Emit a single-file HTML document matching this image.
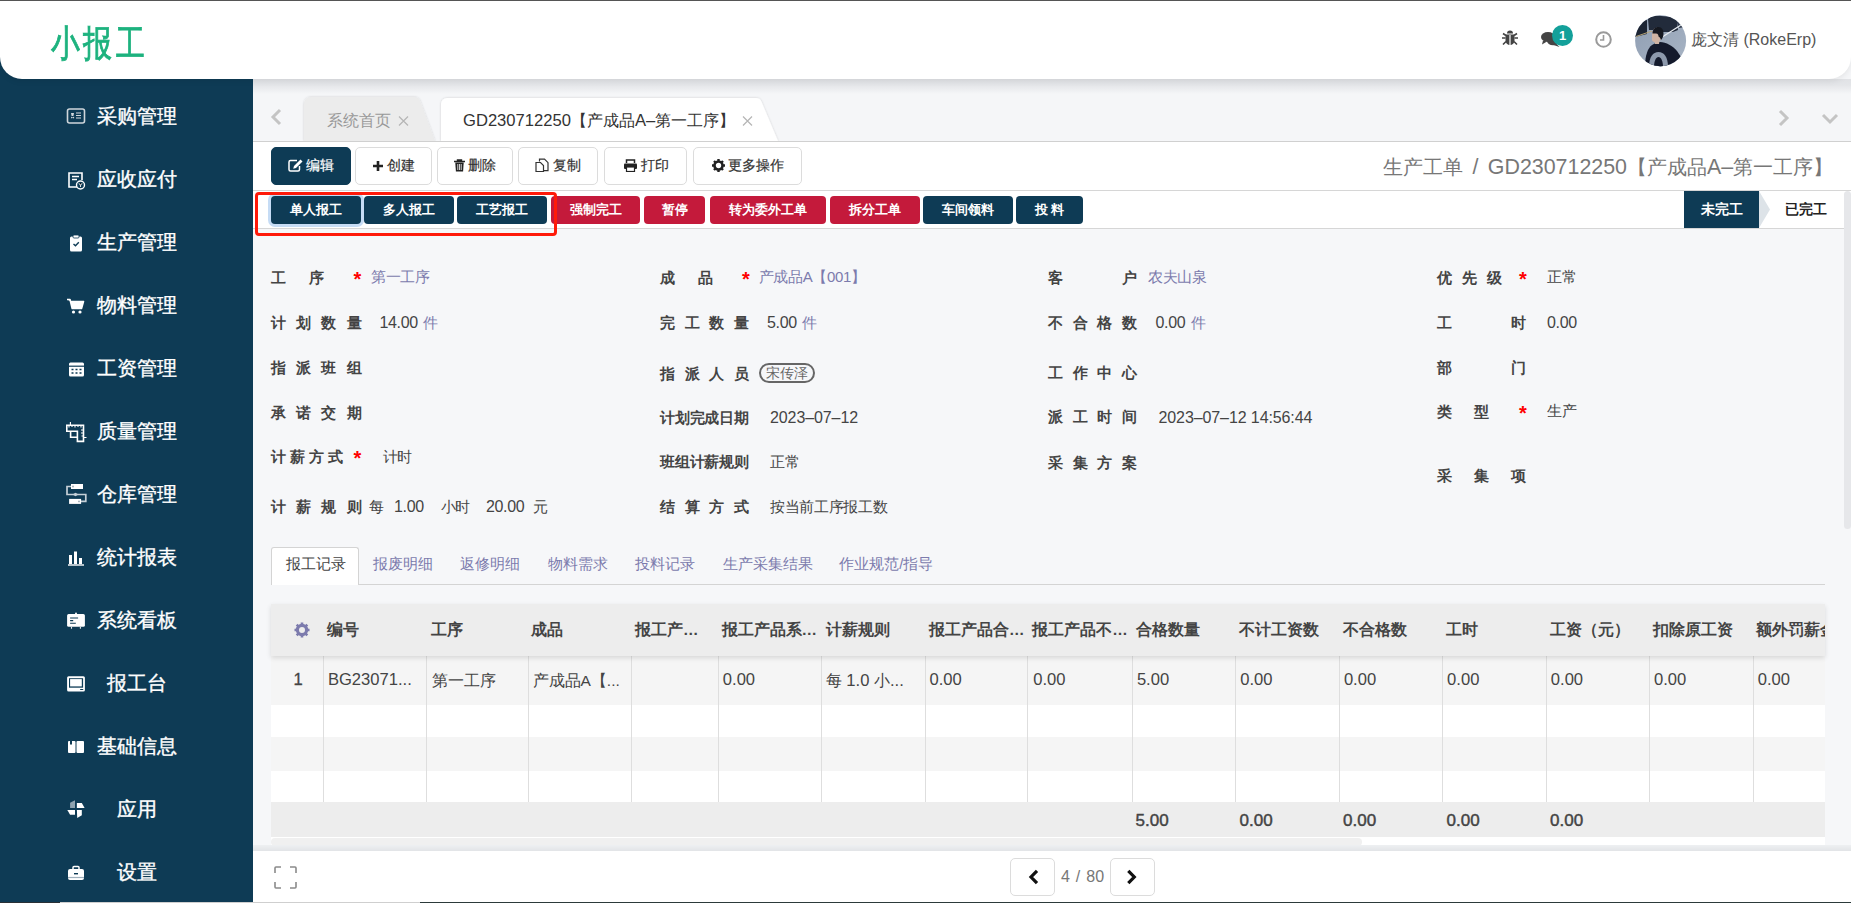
<!DOCTYPE html>
<html><head><meta charset="utf-8">
<style>
*{box-sizing:border-box;margin:0;padding:0}
html,body{width:1851px;height:903px;overflow:hidden}
body{position:relative;background:#f5f6f8;font-family:"Liberation Sans",sans-serif;color:#444;font-size:14px}
.a{position:absolute;white-space:nowrap}
#topline{position:absolute;left:0;top:0;width:1851px;height:1px;background:#555;z-index:20}
#header{position:absolute;left:0;top:1px;width:1851px;height:78px;background:#fff;border-radius:0 0 22px 22px;box-shadow:0 2px 6px rgba(0,0,0,.08);z-index:10}
#logo{left:50.5px;top:21px;font-size:37px;line-height:44px;color:#1db27e;letter-spacing:4.5px;transform:scaleX(.78);transform-origin:0 0;-webkit-text-stroke:.9px #1db27e}
#sidebar{position:absolute;left:0;top:0;width:253px;height:903px;background:#0e3b55;z-index:5}
.mi{position:absolute;left:0;width:253px;height:40px;color:#fff;font-size:20px;line-height:40px}
.mi .t{position:absolute;left:97px;top:0;width:80px;text-align:center;-webkit-text-stroke:.35px #fff}
.mi svg{position:absolute;left:66px;top:11px}
#main{position:static}

.tb{position:absolute;top:147px;height:38px;border:1px solid #dcdcdc;border-radius:5px;background:#fff;color:#333;font-size:14px;line-height:34px;text-align:center;-webkit-text-stroke:.2px currentColor}
.tb svg{vertical-align:-2px;margin-right:3px}
.ab{position:absolute;top:196px;height:28px;border-radius:4px;color:#fff;font-size:13px;line-height:28px;text-align:center;font-weight:bold;background:#0e3b55}
.ab.r{background:#c41a3b}

#formbg{position:absolute;left:253px;top:229px;width:1598px;height:621px;background:#f6f7f9}
.lb{font-size:15px;line-height:20px;font-weight:bold;color:#444}
.st{font-size:20px;line-height:20px;color:#f00;font-weight:bold;margin-top:1px;margin-left:1px}
.vl{font-size:15px;letter-spacing:-.35px;line-height:20px;color:#444}
.vl .n{font-size:16px;margin-right:1.5px}
.lk{color:#7c7bad}
.tag{height:20px;width:56px;border:2px solid #666;border-radius:10px;font-size:14px;line-height:16px;color:#666;text-align:center}

.nt{font-size:14.7px;line-height:20px}
.th{font-size:15.5px;line-height:20px;font-weight:bold;color:#444}
.td{font-size:16.6px;line-height:20px;color:#444}
.td.c{font-size:15.5px;margin-top:1px}
.td.b{font-weight:normal;-webkit-text-stroke:.3px #444}
.tf{font-size:17px;line-height:20px;color:#444;-webkit-text-stroke:.45px #444}
.pg{position:absolute;width:45px;height:38px;border:1px solid #dcdcdc;border-radius:5px;background:#fff}
.pg svg{position:absolute;left:-1px;top:-1px}
</style></head><body>
<div id="topline"></div>
<div id="sidebar">
<div class="mi" style="top:96px"><svg width="20" height="18" viewBox="0 0 20 18"><rect x="1.5" y="2" width="17" height="14" rx="2" fill="none" stroke="#cfd6db" stroke-width="1.6"/><path d="M5 6h3l-.6 3H5.6z" fill="#cfd6db"/><circle cx="5.8" cy="10.6" r=".8" fill="#cfd6db"/><circle cx="7.4" cy="10.6" r=".8" fill="#cfd6db"/><path d="M10 6h5M10 8.5h5M10 11h5" stroke="#cfd6db" stroke-width="1.2"/></svg><span class="t">采购管理</span></div>
<div class="mi" style="top:159px"><svg width="20" height="20" viewBox="0 0 20 20"><path d="M12 17H3V3h13v7" fill="none" stroke="#fff" stroke-width="1.6"/><path d="M6 6.5h7M6 9.5h5" stroke="#fff" stroke-width="1.4"/><circle cx="14.5" cy="15" r="4" fill="#0e3b55" stroke="#fff" stroke-width="1.4"/><path d="M13 13.3l1.5 2 1.5-2M14.5 15.3v1.6" stroke="#fff" stroke-width="1"/></svg><span class="t">应收应付</span></div>
<div class="mi" style="top:222px"><svg width="20" height="20" viewBox="0 0 20 20"><rect x="4" y="3.5" width="12" height="15" rx="1.5" fill="#fff"/><rect x="7" y="2" width="6" height="3" rx="1" fill="#fff" stroke="#0e3b55" stroke-width=".8"/><path d="M7.5 11l2 1.8 3.3-3.5" fill="none" stroke="#0e3b55" stroke-width="1.4"/></svg><span class="t">生产管理</span></div>
<div class="mi" style="top:285px"><svg width="20" height="20" viewBox="0 0 20 20"><path d="M1 3.5h3l2.2 9h9.3l2-7H5.2" fill="#fff" stroke="#fff" stroke-width="1.6" stroke-linejoin="round"/><circle cx="7.5" cy="16" r="1.6" fill="#fff"/><circle cx="14" cy="16" r="1.6" fill="#fff"/></svg><span class="t">物料管理</span></div>
<div class="mi" style="top:348px"><svg width="20" height="20" viewBox="0 0 20 20"><rect x="3" y="3.5" width="15" height="14" rx="1.5" fill="#fff"/><path d="M3 7.2h15" stroke="#0e3b55" stroke-width="1.2"/><path d="M5.5 10.5h2M9.5 10.5h2M13.5 10.5h2M5.5 14h2M9.5 14h2M13.5 14h2" stroke="#0e3b55" stroke-width="1.6"/></svg><span class="t">工资管理</span></div>
<div class="mi" style="top:411px"><svg width="22" height="22" viewBox="0 0 22 22"><path d="M0.8 3.2H17.5V19.4H11.4V9.2H0.8Z" fill="none" stroke="#fff" stroke-width="1.6"/><path d="M4.6 9.2V15.3H11.4" fill="none" stroke="#fff" stroke-width="1.6"/><path d="M4.4 0V3M17.5 15.5H20.5M3 3v2.5M6 3v2M9 3v2.5M12 3v2M15 5.5v-2M17.5 8H15M17.5 11h-2.5M17.5 14h-2" stroke="#fff" stroke-width="1.1"/></svg><span class="t">质量管理</span></div>
<div class="mi" style="top:474px" ><svg style="top:8px" width="22" height="24" viewBox="0 0 22 24"><rect x="5" y="2" width="12" height="5" fill="#fff"/><rect x="3.1" y="16.9" width="12" height="5" fill="#fff"/><path d="M5 4.5H1V12.5H19.8V19.4H15" fill="none" stroke="#c5d0d8" stroke-width="1.7"/><path d="M6.5 12.5L9.5 10.8 12.5 12.5 9.5 14.2z" fill="#c5d0d8"/><circle cx="7" cy="4.5" r=".9" fill="#9aa8b3"/><circle cx="13" cy="19.4" r=".9" fill="#9aa8b3"/></svg><span class="t">仓库管理</span></div>
<div class="mi" style="top:537px"><svg width="20" height="20" viewBox="0 0 20 20"><path d="M3 7h3v9H3zM8 3.5h3V16H8zM13 10h3v6h-3z" fill="#fff"/><path d="M2 17h16" stroke="#fff" stroke-width="1.4"/></svg><span class="t">统计报表</span></div>
<div class="mi" style="top:600px"><svg width="20" height="20" viewBox="0 0 20 20"><rect x="1.1" y="3.1" width="17.8" height="12.7" rx="1.5" fill="#fff"/><circle cx="10" cy="2.6" r="1" fill="#fff"/><path d="M4.1 7H12.1M4.1 9.6H7.2M4.1 12.2H9.8" stroke="#0e3b55" stroke-width="1.1"/><path d="M5.5 15.8V17.8M14.4 15.8V17.8" stroke="#dfe5e9" stroke-width="1.1"/></svg><span class="t">系统看板</span></div>
<div class="mi" style="top:663px"><svg width="20" height="20" viewBox="0 0 20 20"><rect x="1.1" y="2.2" width="17.8" height="15.2" rx="1.5" fill="#fff"/><rect x="3" y="4.2" width="14.1" height="9.5" fill="#0e3b55"/><rect x="4.1" y="5.1" width="11.7" height="7.3" fill="#fff"/><rect x="14" y="15.1" width="3.4" height="0.9" rx=".4" fill="#0e3b55"/></svg><span class="t">报工台</span></div>
<div class="mi" style="top:726px"><svg width="20" height="20" viewBox="0 0 20 20"><rect x="2" y="4" width="7.5" height="12" rx="1" fill="#fff"/><rect x="10.5" y="4" width="7.5" height="12" rx="1" fill="#fff"/><path d="M4 4v4l1-1 1 1V4" fill="#0e3b55"/></svg><span class="t">基础信息</span></div>
<div class="mi" style="top:789px"><svg width="20" height="20" viewBox="0 0 20 20"><path d="M4.1 2.8L9 0.3V8H4.1z" fill="#8fa3b0"/><path d="M10.9 3.1H15.8L18.6 8H10.9z" fill="#fff"/><path d="M1.3 9.9H9V14.8H4.1z" fill="#fff"/><path d="M10.9 9.9H15.8V15.2L11.2 18z" fill="#fff"/></svg><span class="t">应用</span></div>
<div class="mi" style="top:852px"><svg width="20" height="20" viewBox="0 0 20 20"><rect x="2" y="6" width="16" height="11" rx="2" fill="#fff"/><path d="M7 6V4.5a1 1 0 0 1 1-1h4a1 1 0 0 1 1 1V6" fill="none" stroke="#fff" stroke-width="1.5"/><rect x="8" y="10" width="4" height="1.4" fill="#0e3b55"/><path d="M2 14.5h16" stroke="#9fb0bc" stroke-width="1.2"/></svg><span class="t">设置</span></div>
</div>
<div id="header">
  <div class="a" id="logo">小报工</div>
  <svg class="a" style="left:1501px;top:28px" width="18" height="18" viewBox="0 0 18 18"><path d="M6 4.5a3 3 0 0 1 6 0z" fill="#444"/><path d="M4.5 5.5h9v6a4.5 4.5 0 0 1-9 0z" fill="#444"/><path d="M9 6v10" stroke="#fff" stroke-width="1.2"/><path d="M4.5 9H1M13.5 9H17M5 6.5L2 4.5M13 6.5l3-2M5 12.5l-3 3M13 12.5l3 3" stroke="#444" stroke-width="1.6"/></svg>
  <svg class="a" style="left:1541px;top:30px" width="20" height="17" viewBox="0 0 20 17"><ellipse cx="7" cy="6" rx="7" ry="5" fill="#444"/><path d="M2 9.5L1 13.5 6 10.5z" fill="#444"/><ellipse cx="12" cy="10" rx="6" ry="4.2" fill="#444"/><path d="M15 12.5l3.5 3.5-6-2z" fill="#444"/></svg>
  <div class="a" style="left:1552px;top:24px;width:21px;height:21px;border-radius:50%;background:#13a09a;color:#fff;font-size:13px;line-height:21px;text-align:center;font-weight:bold">1</div>
  <svg class="a" style="left:1595px;top:30px" width="17" height="17" viewBox="0 0 17 17"><circle cx="8.5" cy="8.5" r="7.3" fill="none" stroke="#9a9a9a" stroke-width="2"/><path d="M8.5 4v5H5" fill="none" stroke="#9a9a9a" stroke-width="1.6"/></svg>
  <svg class="a" style="left:1635px;top:14px" width="52" height="52" viewBox="0 0 52 52"><defs><clipPath id="av"><circle cx="25.6" cy="25.7" r="25.5"/></clipPath><linearGradient id="avg" x1="0" y1="0" x2="1" y2="1"><stop offset="0" stop-color="#8e9db2"/><stop offset="1" stop-color="#a9b5c5"/></linearGradient></defs><g clip-path="url(#av)"><rect width="52" height="52" fill="url(#avg)"/><path d="M0 8L12 5V19L0 22z" fill="#1c2433"/><path d="M13 4c2-3 10-4 13-3l12 1 4 4 1 9-5 2H28l-3-2H14z" fill="#222b3b"/><path d="M40 3l8 3 2 6-6 1z" fill="#2e384a"/><path d="M1 21.5L17 16" stroke="#b9a77a" stroke-width="1"/><path d="M28 21.5L46 10" stroke="#e8ecf0" stroke-width="1.3"/><path d="M10 52c0-12 3-19 7-22 3-2 6-3 8-3 6 0 13 4 17 9l4 6v10z" fill="#141a2c"/><path d="M17 21c0-5 2-8.5 5.5-8.5 3 0 5 3 5 6.5 0 3-1.5 5.5-3 7l-.5 3h-4l-.5-2c-1.5 0-2.5-1-2.5-2.5z" fill="#cfb3a3"/><path d="M17.5 18.5c0-4 2.5-6.5 6-6.5s5 3 5 6.5c0 3-1 5-2.5 6.5-.5-2-1.5-3-2.5-3.5 0-1.5-.5-3-2.5-3z" fill="#151820"/><path d="M14 52c0-10 4-15 9.5-15S33 42 33 52z" fill="#8d99ac"/><path d="M19 52c0-6 2-10 4.5-10S28 46 28 52z" fill="#141a2c"/></g></svg>
  <div class="a" style="left:1691px;top:29px;font-size:16px;line-height:20px;color:#555">庞文清 (RokeErp)</div>
</div>
<div id="main">
<div class="a" style="left:253px;top:79px;width:1598px;height:15px;background:linear-gradient(rgba(30,35,50,.095),rgba(30,35,50,.08) 40%,rgba(30,35,50,0));z-index:6"></div>
<!-- tab bar -->
<svg class="a" style="left:253px;top:80px" width="1598" height="62" viewBox="253 80 1598 62">
 <defs><filter id="tsh" x="-10%" y="-20%" width="120%" height="140%"><feDropShadow dx="0" dy="0" stdDeviation="1" flood-color="#000" flood-opacity=".17"/></filter></defs>
 <path d="M304 141V104a7 7 0 0 1 7-7H414a7 7 0 0 1 6.2 4.2L435 141z" fill="#ececec" filter="url(#tsh)"/>
 <path d="M441 141V104a6 6 0 0 1 6-6H756a6 6 0 0 1 5.6 4L778 141z" fill="#fff" filter="url(#tsh)"/>
 <path d="M253 141.5H1851" stroke="#d0d0d0" stroke-width="1"/>
 <path d="M280 110l-7 7 7 7" fill="none" stroke="#c4c4c4" stroke-width="3"/>
 <path d="M1780 111l7 7-7 7" fill="none" stroke="#c4c4c4" stroke-width="3"/>
 <path d="M1823 115l7 7 7-7" fill="none" stroke="#c4c4c4" stroke-width="3"/>
</svg>
<div class="a" style="left:327px;top:111px;font-size:16px;line-height:20px;color:#999">系统首页</div>
<svg class="a" style="left:398px;top:116px" width="11" height="10" viewBox="0 0 11 10"><path d="M1 0.5l9 9M10 0.5l-9 9" stroke="#b5b5b5" stroke-width="1.2"/></svg>
<div class="a" style="left:463px;top:111px;font-size:16px;line-height:20px;color:#333"><span style="font-size:16.6px">GD230712250</span>【产成品<span style="font-size:16.6px">A–</span>第一工序】</div>
<svg class="a" style="left:742px;top:116px" width="11" height="10" viewBox="0 0 11 10"><path d="M1 0.5l9 9M10 0.5l-9 9" stroke="#b5b5b5" stroke-width="1.2"/></svg>
<!-- toolbar -->
<div class="a" style="left:253px;top:142px;width:1598px;height:48px;background:#fff"></div>
<div class="a" style="left:253px;top:190px;width:1598px;height:1px;background:#d6d6d6"></div>
<div class="tb" style="left:271px;width:80px;background:#0e3b55;border-color:#0e3b55;color:#fff"><svg width="15" height="13" viewBox="0 0 15 13"><path d="M9 1.5H2.5a1.5 1.5 0 0 0-1.5 1.5v7.5a1.5 1.5 0 0 0 1.5 1.5H10a1.5 1.5 0 0 0 1.5-1.5V7" fill="none" stroke="#fff" stroke-width="1.5"/><path d="M12.5 0.5l2 2-6.5 6.5-2.8.8.8-2.8z" fill="#fff"/></svg>编辑</div>
<div class="tb" style="left:355px;width:77px"><svg width="12" height="12" viewBox="0 0 12 12"><path d="M6 1v10M1 6h10" stroke="#222" stroke-width="2.6"/></svg>创建</div>
<div class="tb" style="left:437px;width:76px"><svg width="11" height="13" viewBox="0 0 11 13"><path d="M0 2.5h11M3.5 2.5V1h4v1.5" fill="none" stroke="#222" stroke-width="1.4"/><path d="M1.3 3.5h8.4l-.6 9H1.9z" fill="#222"/><path d="M3.8 5v6M5.5 5v6M7.2 5v6" stroke="#fff" stroke-width=".8"/></svg>删除</div>
<div class="tb" style="left:518px;width:80px"><svg width="15" height="14" viewBox="0 0 15 14"><path d="M4.5 3.5V1.2h5L13 4.7v8h-5" fill="none" stroke="#333" stroke-width="1.2"/><path d="M1 4.5h4.5L8.5 7.5v6H1z" fill="none" stroke="#333" stroke-width="1.2"/></svg>复制</div>
<div class="tb" style="left:604px;width:83px"><svg width="15" height="13" viewBox="0 0 15 13"><path d="M3.5 4V1h8v3" fill="none" stroke="#222" stroke-width="1.5"/><rect x="1" y="4.5" width="13" height="5.5" rx="1" fill="#222"/><rect x="3.5" y="8" width="8" height="4.5" fill="#fff" stroke="#222" stroke-width="1.2"/></svg>打印</div>
<div class="tb" style="left:693px;width:109px"><svg width="13" height="13" viewBox="0 0 13 13"><circle cx="6.5" cy="6.5" r="4" fill="none" stroke="#222" stroke-width="2.6"/><path d="M6.5 0v3M6.5 10v3M0 6.5h3M10 6.5h3M2 2l2 2M9 9l2 2M11 2L9 4M2 11l2-2" stroke="#222" stroke-width="2.4"/></svg>更多操作</div>
<div class="a" style="left:1383px;top:155px;font-size:20px;line-height:24px;color:#777">生产工单<span style="font-size:21.4px;word-spacing:3.5px"> / GD230712250</span>【产成品<span style="font-size:21.4px">A–</span>第一工序】</div>
<div id="formbg"></div>
<!--FORM-->
<span class="a lb" style="left:271.3px;top:268px">工</span>
<span class="a lb" style="left:309.2px;top:268px">序</span>
<span class="a st" style="left:352.5px;top:268px">*</span>
<span class="a vl" style="left:371.0px;top:267px"><span class="lk">第一工序</span></span>
<span class="a lb" style="left:270.8px;top:313px">计</span>
<span class="a lb" style="left:296.1px;top:313px">划</span>
<span class="a lb" style="left:321.4px;top:313px">数</span>
<span class="a lb" style="left:346.7px;top:313px">量</span>
<span class="a vl" style="left:379.5px;top:313px"><span class="n">14.00</span> <span class="lk">件</span></span>
<span class="a lb" style="left:270.8px;top:358px">指</span>
<span class="a lb" style="left:296.1px;top:358px">派</span>
<span class="a lb" style="left:321.4px;top:358px">班</span>
<span class="a lb" style="left:346.7px;top:358px">组</span>
<span class="a lb" style="left:270.8px;top:403px">承</span>
<span class="a lb" style="left:296.1px;top:403px">诺</span>
<span class="a lb" style="left:321.4px;top:403px">交</span>
<span class="a lb" style="left:346.7px;top:403px">期</span>
<span class="a lb" style="left:271.3px;top:447px">计</span>
<span class="a lb" style="left:290.3px;top:447px">薪</span>
<span class="a lb" style="left:309.4px;top:447px">方</span>
<span class="a lb" style="left:328.4px;top:447px">式</span>
<span class="a st" style="left:352.5px;top:447px">*</span>
<span class="a vl" style="left:382.5px;top:447px">计时</span>
<span class="a lb" style="left:270.8px;top:497px">计</span>
<span class="a lb" style="left:296.1px;top:497px">薪</span>
<span class="a lb" style="left:321.4px;top:497px">规</span>
<span class="a lb" style="left:346.7px;top:497px">则</span>
<span class="a vl" style="left:368.5px;top:497px">每</span>
<span class="a vl" style="left:394.0px;top:497px"><span class="n">1.00</span></span>
<span class="a vl" style="left:440.8px;top:497px">小时</span>
<span class="a vl" style="left:486.0px;top:497px"><span class="n">20.00</span></span>
<span class="a vl" style="left:533.0px;top:497px">元</span>
<span class="a lb" style="left:659.5px;top:268px">成</span>
<span class="a lb" style="left:698.4px;top:268px">品</span>
<span class="a st" style="left:741.0px;top:268px">*</span>
<span class="a vl" style="left:758.8px;top:267px"><span class="lk">产成品A【001】</span></span>
<span class="a lb" style="left:659.5px;top:313px">完</span>
<span class="a lb" style="left:684.5px;top:313px">工</span>
<span class="a lb" style="left:709.4px;top:313px">数</span>
<span class="a lb" style="left:734.4px;top:313px">量</span>
<span class="a vl" style="left:767.0px;top:313px"><span class="n">5.00</span> <span class="lk">件</span></span>
<span class="a lb" style="left:659.5px;top:363.5px">指</span>
<span class="a lb" style="left:684.5px;top:363.5px">派</span>
<span class="a lb" style="left:709.4px;top:363.5px">人</span>
<span class="a lb" style="left:734.4px;top:363.5px">员</span>
<span class="a tag" style="left:759px;top:363px">宋传泽</span>
<span class="a lb" style="left:659.5px;top:408.3px">计</span>
<span class="a lb" style="left:674.5px;top:408.3px">划</span>
<span class="a lb" style="left:689.5px;top:408.3px">完</span>
<span class="a lb" style="left:704.4px;top:408.3px">成</span>
<span class="a lb" style="left:719.4px;top:408.3px">日</span>
<span class="a lb" style="left:734.4px;top:408.3px">期</span>
<span class="a vl" style="left:770.0px;top:407.5px"><span class="n" style="letter-spacing:-.1px">2023–07–12</span></span>
<span class="a lb" style="left:659.5px;top:452.4px">班</span>
<span class="a lb" style="left:674.5px;top:452.4px">组</span>
<span class="a lb" style="left:689.5px;top:452.4px">计</span>
<span class="a lb" style="left:704.4px;top:452.4px">薪</span>
<span class="a lb" style="left:719.4px;top:452.4px">规</span>
<span class="a lb" style="left:734.4px;top:452.4px">则</span>
<span class="a vl" style="left:770.0px;top:452.4px">正常</span>
<span class="a lb" style="left:659.5px;top:497.4px">结</span>
<span class="a lb" style="left:684.5px;top:497.4px">算</span>
<span class="a lb" style="left:709.4px;top:497.4px">方</span>
<span class="a lb" style="left:734.4px;top:497.4px">式</span>
<span class="a vl" style="left:770.0px;top:497.4px">按当前工序报工数</span>
<span class="a lb" style="left:1047.5px;top:268px">客</span>
<span class="a lb" style="left:1122.4px;top:268px">户</span>
<span class="a vl" style="left:1148.0px;top:267px"><span class="lk">农夫山泉</span></span>
<span class="a lb" style="left:1047.5px;top:313px">不</span>
<span class="a lb" style="left:1072.5px;top:313px">合</span>
<span class="a lb" style="left:1097.4px;top:313px">格</span>
<span class="a lb" style="left:1122.4px;top:313px">数</span>
<span class="a vl" style="left:1155.5px;top:313px"><span class="n">0.00</span> <span class="lk">件</span></span>
<span class="a lb" style="left:1047.5px;top:363px">工</span>
<span class="a lb" style="left:1072.5px;top:363px">作</span>
<span class="a lb" style="left:1097.4px;top:363px">中</span>
<span class="a lb" style="left:1122.4px;top:363px">心</span>
<span class="a lb" style="left:1047.5px;top:407.4px">派</span>
<span class="a lb" style="left:1072.5px;top:407.4px">工</span>
<span class="a lb" style="left:1097.4px;top:407.4px">时</span>
<span class="a lb" style="left:1122.4px;top:407.4px">间</span>
<span class="a vl" style="left:1158.5px;top:407.5px"><span class="n" style="letter-spacing:-.1px">2023–07–12 14:56:44</span></span>
<span class="a lb" style="left:1047.5px;top:453.3px">采</span>
<span class="a lb" style="left:1072.5px;top:453.3px">集</span>
<span class="a lb" style="left:1097.4px;top:453.3px">方</span>
<span class="a lb" style="left:1122.4px;top:453.3px">案</span>
<span class="a lb" style="left:1436.5px;top:268px">优</span>
<span class="a lb" style="left:1462.0px;top:268px">先</span>
<span class="a lb" style="left:1487.4px;top:268px">级</span>
<span class="a st" style="left:1518.0px;top:268px">*</span>
<span class="a vl" style="left:1547.0px;top:267px">正常</span>
<span class="a lb" style="left:1436.5px;top:313px">工</span>
<span class="a lb" style="left:1511.4px;top:313px">时</span>
<span class="a vl" style="left:1547.0px;top:313px"><span class="n">0.00</span></span>
<span class="a lb" style="left:1436.5px;top:358px">部</span>
<span class="a lb" style="left:1511.4px;top:358px">门</span>
<span class="a lb" style="left:1436.5px;top:402px">类</span>
<span class="a lb" style="left:1474.4px;top:402px">型</span>
<span class="a st" style="left:1518.0px;top:402px">*</span>
<span class="a vl" style="left:1547.0px;top:401px">生产</span>
<span class="a lb" style="left:1436.5px;top:466px">采</span>
<span class="a lb" style="left:1474.0px;top:466px">集</span>
<span class="a lb" style="left:1511.4px;top:466px">项</span>
<!--/FORM-->
<!--TABLE-->
<div class="a" style="left:271px;top:583.5px;width:1554px;height:1px;background:#d4d4d4"></div>
<div class="a" style="left:271px;top:547px;width:88px;height:38px;background:#fff;border:1px solid #d4d4d4;border-bottom:none;border-radius:3px 3px 0 0"></div>
<span class="a nt" style="left:286.0px;top:554px;color:#444">报工记录</span>
<span class="a nt" style="left:373.0px;top:554px;color:#7c7bad">报废明细</span>
<span class="a nt" style="left:459.9px;top:554px;color:#7c7bad">返修明细</span>
<span class="a nt" style="left:547.7px;top:554px;color:#7c7bad">物料需求</span>
<span class="a nt" style="left:635.1px;top:554px;color:#7c7bad">投料记录</span>
<span class="a nt" style="left:722.8px;top:554px;color:#7c7bad">生产采集结果</span>
<span class="a nt" style="left:839.3px;top:554px;color:#7c7bad">作业规范/指导</span>
<div class="a" style="left:271px;top:603.5px;width:1554px;height:52.5px;background:#ededed;box-shadow:0 2px 5px rgba(0,0,0,.12);z-index:2"></div>
<div class="a" style="left:271px;top:656px;width:1554px;height:48.7px;background:#f5f5f5"></div>
<div class="a" style="left:271px;top:704.7px;width:1554px;height:32.3px;background:#fff"></div>
<div class="a" style="left:271px;top:737px;width:1554px;height:33.7px;background:#f5f5f5"></div>
<div class="a" style="left:271px;top:770.7px;width:1554px;height:31.3px;background:#fff"></div>
<div class="a" style="left:271px;top:802px;width:1554px;height:35px;background:#ededed"></div>
<div class="a" style="left:323.0px;top:656px;width:1px;height:146px;background:#dedede"></div>
<div class="a" style="left:425.9px;top:656px;width:1px;height:146px;background:#dedede"></div>
<div class="a" style="left:528.0px;top:656px;width:1px;height:146px;background:#dedede"></div>
<div class="a" style="left:630.9px;top:656px;width:1px;height:146px;background:#dedede"></div>
<div class="a" style="left:717.9px;top:656px;width:1px;height:146px;background:#dedede"></div>
<div class="a" style="left:821.1px;top:656px;width:1px;height:146px;background:#dedede"></div>
<div class="a" style="left:925.2px;top:656px;width:1px;height:146px;background:#dedede"></div>
<div class="a" style="left:1027.4px;top:656px;width:1px;height:146px;background:#dedede"></div>
<div class="a" style="left:1132.1px;top:656px;width:1px;height:146px;background:#dedede"></div>
<div class="a" style="left:1235.3px;top:656px;width:1px;height:146px;background:#dedede"></div>
<div class="a" style="left:1339.0px;top:656px;width:1px;height:146px;background:#dedede"></div>
<div class="a" style="left:1442.2px;top:656px;width:1px;height:146px;background:#dedede"></div>
<div class="a" style="left:1545.9px;top:656px;width:1px;height:146px;background:#dedede"></div>
<div class="a" style="left:1649.1px;top:656px;width:1px;height:146px;background:#dedede"></div>
<div class="a" style="left:1752.8px;top:656px;width:1px;height:146px;background:#dedede"></div>
<svg class="a" style="left:293.5px;top:621.5px;z-index:3" width="16" height="16" viewBox="0 0 16 16"><circle cx="8" cy="8" r="4.6" fill="none" stroke="#7c7bad" stroke-width="3.2"/><path d="M8 0.5v3M8 12.5v3M0.5 8h3M12.5 8h3M2.7 2.7l2.1 2.1M11.2 11.2l2.1 2.1M13.3 2.7l-2.1 2.1M2.7 13.3l2.1-2.1" stroke="#7c7bad" stroke-width="2.6"/></svg>
<div class="a" style="left:271px;top:603.5px;width:1554px;height:52.5px;overflow:hidden;z-index:3">
<span class="a th" style="left:55.9px;top:16px">编号</span>
<span class="a th" style="left:159.6px;top:16px">工序</span>
<span class="a th" style="left:260.1px;top:16px">成品</span>
<span class="a th" style="left:364.1px;top:16px">报工产…</span>
<span class="a th" style="left:450.5px;top:16px">报工产品系…</span>
<span class="a th" style="left:554.7px;top:16px">计薪规则</span>
<span class="a th" style="left:657.9px;top:16px">报工产品合…</span>
<span class="a th" style="left:761.3px;top:16px">报工产品不…</span>
<span class="a th" style="left:865.0px;top:16px">合格数量</span>
<span class="a th" style="left:968.2px;top:16px">不计工资数</span>
<span class="a th" style="left:1071.9px;top:16px">不合格数</span>
<span class="a th" style="left:1175.1px;top:16px">工时</span>
<span class="a th" style="left:1278.8px;top:16px">工资（元）</span>
<span class="a th" style="left:1382.0px;top:16px">扣除原工资</span>
<span class="a th" style="left:1485.2px;top:16px">额外罚薪金</span>
</div>
<span class="a td b" style="left:293.4px;top:670px">1</span>
<span class="a td " style="left:327.9px;top:670px">BG23071...</span>
<span class="a td c" style="left:431.5px;top:670px">第一工序</span>
<span class="a td c" style="left:532.5px;top:670px">产成品A【...</span>
<span class="a td " style="left:722.8px;top:670px">0.00</span>
<span class="a td c" style="left:825.7px;top:670px">每<span style="font-size:16.6px"> 1.0 </span>小<span style="font-size:16.6px">...</span></span>
<span class="a td " style="left:929.5px;top:670px">0.00</span>
<span class="a td " style="left:1033.2px;top:670px">0.00</span>
<span class="a td " style="left:1136.9px;top:670px">5.00</span>
<span class="a td " style="left:1240.2px;top:670px">0.00</span>
<span class="a td " style="left:1343.9px;top:670px">0.00</span>
<span class="a td " style="left:1447.1px;top:670px">0.00</span>
<span class="a td " style="left:1550.8px;top:670px">0.00</span>
<span class="a td " style="left:1654.0px;top:670px">0.00</span>
<span class="a td " style="left:1757.7px;top:670px">0.00</span>
<span class="a tf" style="left:1135.5px;top:811px">5.00</span>
<span class="a tf" style="left:1239.5px;top:811px">0.00</span>
<span class="a tf" style="left:1343.0px;top:811px">0.00</span>
<span class="a tf" style="left:1446.5px;top:811px">0.00</span>
<span class="a tf" style="left:1550.0px;top:811px">0.00</span>
<div class="a" style="left:271px;top:837px;width:1554px;height:9px;background:#fff"></div>
<div class="a" style="left:271px;top:837.5px;width:1091px;height:8.5px;background:#f0f0f0;border-radius:4px"></div>
<div class="a" style="left:1843.5px;top:191px;width:7.5px;height:338px;background:#e6e7ea;border-radius:4px;z-index:8"></div>
<div class="a" style="left:253px;top:845px;width:1598px;height:6px;background:linear-gradient(#eef0f2,#e2e4e7)"></div>
<div class="a" style="left:253px;top:850.5px;width:1598px;height:52.5px;background:#fff"></div>
<svg class="a" style="left:274px;top:866px" width="23" height="23" viewBox="0 0 23 23"><path d="M1 7V2a1 1 0 0 1 1-1h5M16 1h5a1 1 0 0 1 1 1v5M22 16v5a1 1 0 0 1-1 1h-5M7 22H2a1 1 0 0 1-1-1v-5" fill="none" stroke="#8a8a8a" stroke-width="1.6"/></svg>
<div class="a pg" style="left:1010px;top:858px"><svg width="45" height="38" viewBox="0 0 45 38"><path d="M27 12.8l-6 6.2 6 6.2" fill="none" stroke="#111" stroke-width="3.2"/></svg></div>
<span class="a" style="left:1061px;top:867px;font-size:16px;line-height:20px;color:#777;word-spacing:1.5px">4 / 80</span>
<div class="a pg" style="left:1110px;top:858px"><svg width="45" height="38" viewBox="0 0 45 38"><path d="M18.3 12.8l6 6.2-6 6.2" fill="none" stroke="#111" stroke-width="3.2"/></svg></div>
<div class="a" style="left:0;top:902px;width:60px;height:1px;background:#2a3035;z-index:30"></div>
<div class="a" style="left:60px;top:902px;width:360px;height:1px;background:#cfcfcf;z-index:30"></div>
<div class="a" style="left:420px;top:902px;width:1431px;height:1px;background:#2c3a3a;z-index:30"></div>
<!--/TABLE-->
<!-- action row -->
<div class="a" style="left:253px;top:191px;width:1598px;height:37px;background:#fff"></div>
<div class="a" style="left:253px;top:228px;width:1598px;height:1px;background:#d6d6d6"></div>
<div class="ab" style="left:271px;width:90px;box-shadow:0 0 0 3px #c6dcf5">单人报工</div>
<div class="ab" style="left:364px;width:90px">多人报工</div>
<div class="ab" style="left:457px;width:90px">工艺报工</div>
<div class="ab r" style="left:551px;width:89px">强制完工</div>
<div class="ab r" style="left:644px;width:61px">暂停</div>
<div class="ab r" style="left:710px;width:116px">转为委外工单</div>
<div class="ab r" style="left:830px;width:90px">拆分工单</div>
<div class="ab" style="left:923px;width:90px">车间领料</div>
<div class="ab" style="left:1016px;width:67px">投 料</div>
<div class="a" style="left:255px;top:192px;width:302px;height:44px;border:3px solid #ff1a0a;border-radius:4px"></div>
<div class="a" style="left:1684px;top:191px;width:75px;height:37px;background:#0e3b55;color:#fff;font-size:14px;line-height:37px;text-align:center;font-weight:bold">未完工</div>
<svg class="a" style="left:1759px;top:191px" width="12" height="37" viewBox="0 0 12 37"><path d="M0 0l11 18.5L0 37z" fill="#dde3e8"/></svg>
<div class="a" style="left:1785px;top:191px;font-size:14px;line-height:37px;color:#222;font-weight:bold">已完工</div>
</div>
</body></html>
